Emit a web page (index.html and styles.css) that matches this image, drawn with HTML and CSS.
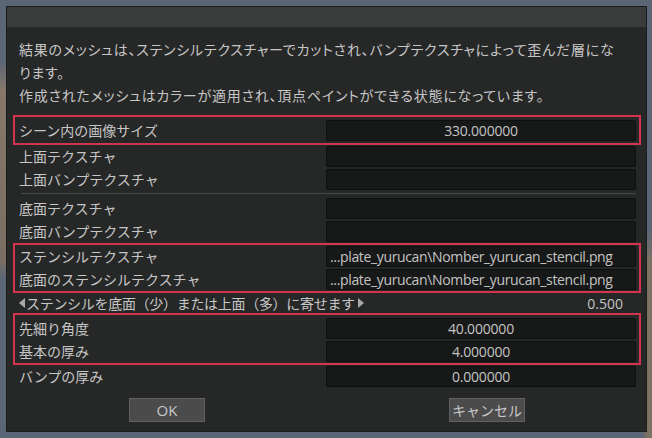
FILE: index.html
```html
<!DOCTYPE html>
<html lang="ja">
<head>
<meta charset="utf-8">
<link rel="stylesheet" href="styles.css">
</head>
<body>
<div class="dialog">
  <div class="titlebar"></div>
  <div class="content">
    <p class="desc">結果のメッシュは、ステンシルテクスチャーでカットされ、バンプテクスチャによって歪んだ層にな<br>ります。<br>作成されたメッシュはカラーが適用され、頂点ペイントができる状態になっています。</p>

    <div class="group hl g1">
      <div class="row"><span class="label">シーン内の画像サイズ</span><span class="field num">330.000000</span></div>
    </div>

    <div class="group">
      <div class="row"><span class="label">上面テクスチャ</span><span class="field"></span></div>
      <div class="row"><span class="label">上面バンプテクスチャ</span><span class="field"></span></div>
    </div>
    <div class="sep"></div>
    <div class="group">
      <div class="row"><span class="label">底面テクスチャ</span><span class="field"></span></div>
      <div class="row"><span class="label">底面バンプテクスチャ</span><span class="field"></span></div>
    </div>

    <div class="group hl">
      <div class="row"><span class="label">ステンシルテクスチャ</span><span class="field path">...plate_yurucan\Nomber_yurucan_stencil.png</span></div>
      <div class="row"><span class="label">底面のステンシルテクスチャ</span><span class="field path">...plate_yurucan\Nomber_yurucan_stencil.png</span></div>
    </div>

    <div class="group">
      <div class="row slider"><span class="label"><i class="tri left"></i>ステンシルを底面（少）または上面（多）に寄せます<i class="tri right"></i></span><span class="sval">0.500</span></div>
    </div>

    <div class="group hl g3">
      <div class="row"><span class="label">先細り角度</span><span class="field num">40.000000</span></div>
      <div class="row"><span class="label">基本の厚み</span><span class="field num">4.000000</span></div>
    </div>

    <div class="group">
      <div class="row"><span class="label">バンプの厚み</span><span class="field num">0.000000</span></div>
    </div>

    <div class="buttons">
      <button class="btn ok">OK</button>
      <button class="btn">キャンセル</button>
    </div>
  </div>
</div>
</body>
</html>
```

FILE: styles.css
```css
html, body {
  margin: 0;
  padding: 0;
}
body {
  width: 652px;
  height: 438px;
  overflow: hidden;
  background:
    linear-gradient(to bottom, transparent 60px, #86776a 90px, #7a6e62 260px, transparent 280px) left top / 7px 100% no-repeat,
    linear-gradient(to bottom, transparent 230px, #7b7264 260px) right top / 6px 100% no-repeat,
    linear-gradient(to right, #5a6576 0, #5a6576 640px, #7b7264 650px) left bottom / 100% 6px no-repeat,
    #5a6576;
  padding: 6px 0 0 6px;
  box-sizing: border-box;
  font-family: "Noto Sans CJK JP", "Noto Sans", sans-serif;
  color: #c6c6c6;
}
.dialog {
  width: 641px;
  height: 426px;
  box-sizing: border-box;
  border: 1px solid #1b1c1c;
  background: #262727;
  display: flex;
  flex-direction: column;
}
.titlebar {
  height: 20px;
  background: #3a3b3b;
  flex: none;
}
.content {
  padding: 0 5px 0 6px;
}
.desc {
  margin: 11px 0 8px 6px;
  font-size: 14px;
  line-height: 23px;
  white-space: nowrap;
  font-feature-settings: "palt";
  letter-spacing: 0.75px;
}
.group {
  border-left: 2px solid transparent;
  border-right: 2px solid transparent;
  padding: 0 3px 0 4px;
}
.group.hl {
  border: 2px solid #d3334d;
}
.g1 {
  padding-top: 2px;
  padding-bottom: 1px;
}
.g3 {
  padding-top: 2px;
}
.row {
  display: grid;
  grid-template-columns: minmax(0, 1fr) 310px;
  height: 23px;
  align-items: center;
  font-size: 14px;
}
.label {
  white-space: nowrap;
  line-height: 23px;
}
.field {
  height: 21px;
  box-sizing: border-box;
  background: #171818;
  border: 1px solid #0e0f0f;
  border-radius: 2px;
  font-family: "Open Sans", "Noto Sans", sans-serif;
  font-size: 14px;
  line-height: 19px;
  color: #c4c4c4;
  overflow: hidden;
  white-space: nowrap;
}
.num {
  text-align: center;
  letter-spacing: -0.2px;
}
.path {
  padding-left: 3px;
  letter-spacing: -0.35px;
}
.sep {
  height: 1px;
  background: #474848;
  margin: 2px 5px 3px 8px;
}
.slider {
  height: 20px;
}
.slider .label {
  display: flex;
  align-items: center;
  line-height: 20px;
  letter-spacing: -0.3px;
}
.tri {
  display: inline-block;
  flex: none;
  width: 0;
  height: 0;
  border-top: 5px solid transparent;
  border-bottom: 5px solid transparent;
}
.tri.left {
  border-right: 6px solid #a9a9a9;
  margin-right: 1px;
}
.tri.right {
  border-left: 6px solid #a9a9a9;
  margin-left: 3px;
}
.sval {
  text-align: right;
  padding-right: 13px;
  font-family: "Open Sans", "Noto Sans", sans-serif;
  font-size: 14px;
  color: #c4c4c4;
}
.buttons {
  display: flex;
  justify-content: center;
  gap: 244px;
  margin-top: 10px;
}
.btn {
  width: 76px;
  height: 24px;
  padding: 0;
  background: #4b4b4b;
  border: 1px solid #616161;
  border-radius: 0;
  color: #c8c8c8;
  font-family: "Noto Sans CJK JP", sans-serif;
  font-size: 14px;
  line-height: 20px;
  white-space: nowrap;
}
.btn.ok {
  font-family: "Open Sans", sans-serif;
  font-size: 15px;
}
```
